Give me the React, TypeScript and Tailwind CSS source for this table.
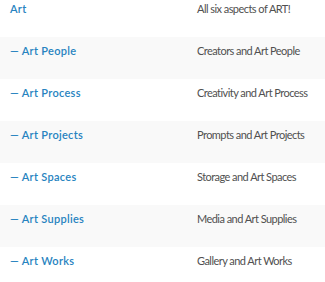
const rows = [
  { name: 'Art', desc: 'All six aspects of ART!', child: false },
  { name: 'Art People', desc: 'Creators and Art People', child: true },
  { name: 'Art Process', desc: 'Creativity and Art Process', child: true },
  { name: 'Art Projects', desc: 'Prompts and Art Projects', child: true },
  { name: 'Art Spaces', desc: 'Storage and Art Spaces', child: true },
  { name: 'Art Supplies', desc: 'Media and Art Supplies', child: true },
  { name: 'Art Works', desc: 'Gallery and Art Works', child: true },
];

export default function App() {
  return (
    <div className="w-[325px] h-[282px] overflow-hidden bg-white font-['Lato',sans-serif] text-[11px] leading-[15px]">
      <div className="-mt-[5px]">
        {rows.map((r, i) => (
          <div key={r.name} className={`flex h-[42px] pt-[6px] ${i % 2 === 1 ? 'bg-[#f9f9f9]' : 'bg-white'}`}>
            <div className="w-[197px] shrink-0 pl-[10px]">
              <a href="#" className="font-semibold text-[#2783c0] tracking-[0.3px]">
                {r.child ? '— ' : ''}
                {r.name}
              </a>
            </div>
            <div className="flex-1 whitespace-nowrap text-[#505050] tracking-[-0.55px]">{r.desc}</div>
          </div>
        ))}
      </div>
    </div>
  );
}
